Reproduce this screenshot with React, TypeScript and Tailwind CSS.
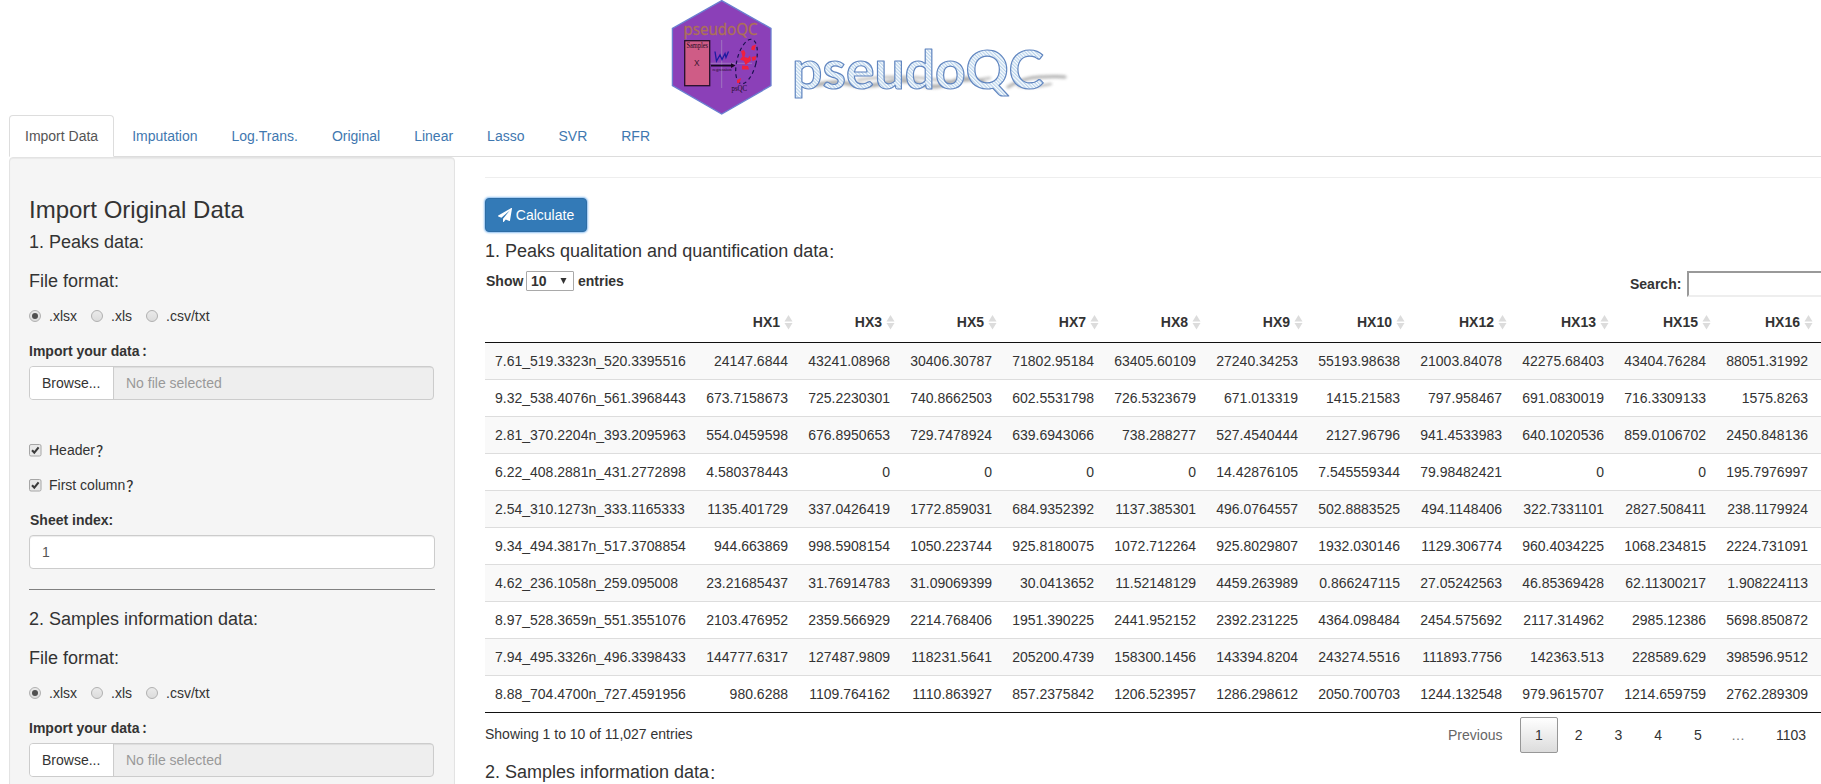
import React from "react";

const TABS = ["Import Data", "Imputation", "Log.Trans.", "Original", "Linear", "Lasso", "SVR", "RFR"];

const COLUMNS = ["HX1", "HX3", "HX5", "HX7", "HX8", "HX9", "HX10", "HX12", "HX13", "HX15", "HX16"];

const ROWS: string[][] = [
  ["7.61_519.3323n_520.3395516", "24147.6844", "43241.08968", "30406.30787", "71802.95184", "63405.60109", "27240.34253", "55193.98638", "21003.84078", "42275.68403", "43404.76284", "88051.31992"],
  ["9.32_538.4076n_561.3968443", "673.7158673", "725.2230301", "740.8662503", "602.5531798", "726.5323679", "671.013319", "1415.21583", "797.958467", "691.0830019", "716.3309133", "1575.8263"],
  ["2.81_370.2204n_393.2095963", "554.0459598", "676.8950653", "729.7478924", "639.6943066", "738.288277", "527.4540444", "2127.96796", "941.4533983", "640.1020536", "859.0106702", "2450.848136"],
  ["6.22_408.2881n_431.2772898", "4.580378443", "0", "0", "0", "0", "14.42876105", "7.545559344", "79.98482421", "0", "0", "195.7976997"],
  ["2.54_310.1273n_333.1165333", "1135.401729", "337.0426419", "1772.859031", "684.9352392", "1137.385301", "496.0764557", "502.8883525", "494.1148406", "322.7331101", "2827.508411", "238.1179924"],
  ["9.34_494.3817n_517.3708854", "944.663869", "998.5908154", "1050.223744", "925.8180075", "1072.712264", "925.8029807", "1932.030146", "1129.306774", "960.4034225", "1068.234815", "2224.731091"],
  ["4.62_236.1058n_259.095008", "23.21685437", "31.76914783", "31.09069399", "30.0413652", "11.52148129", "4459.263989", "0.866247115", "27.05242563", "46.85369428", "62.11300217", "1.908224113"],
  ["8.97_528.3659n_551.3551076", "2103.476952", "2359.566929", "2214.768406", "1951.390225", "2441.952152", "2392.231225", "4364.098484", "2454.575692", "2117.314962", "2985.12386", "5698.850872"],
  ["7.94_495.3326n_496.3398433", "144777.6317", "127487.9809", "118231.5641", "205200.4739", "158300.1456", "143394.8204", "243274.5516", "111893.7756", "142363.513", "228589.629", "398596.9512"],
  ["8.88_704.4700n_727.4591956", "980.6288", "1109.764162", "1110.863927", "857.2375842", "1206.523957", "1286.298612", "2050.700703", "1244.132548", "979.9615707", "1214.659759", "2762.289309"],
];

function Brand() {
  return (
    <svg className="ml-[660px] block h-[115px] w-[420px]" viewBox="660 0 420 115">
      <defs>
        <pattern id="hatch" width="2.5" height="2.5" patternUnits="userSpaceOnUse" patternTransform="rotate(-45)">
          <rect width="2.5" height="2.5" fill="#fafdff" />
          <rect width="1.2" height="2.5" fill="#b9d2ea" />
        </pattern>
        <filter id="soft" x="-10%" y="-80%" width="120%" height="260%">
          <feGaussianBlur stdDeviation="1.5" />
        </filter>
      </defs>
      <polygon points="721.7,0.6 771,28.4 771,85.6 721.7,114 672.4,85.6 672.4,28.4" fill="#8b40b8" stroke="#6a7fd0" strokeWidth="1.3" />
      <path d="M721.7 40V88M690 63.3H752" stroke="#a98bc4" strokeWidth="0.7" />
      <text x="683.5" y="34.6" fontFamily="'Noto Sans', sans-serif" fontSize="16.5" fill="#ad7156" stroke="#ad7156" strokeWidth="0.3" textLength="74" lengthAdjust="spacingAndGlyphs">pseudoQC</text>
      <rect x="684.7" y="40.7" width="25" height="45" fill="#cf5c86" stroke="#26102a" strokeWidth="1.3" />
      <text x="686.5" y="47.5" fontFamily="'Liberation Serif', serif" fontSize="7.5" fill="#1c0b22" textLength="21.5" lengthAdjust="spacingAndGlyphs">Samples</text>
      <text x="694" y="66.3" fontFamily="'Liberation Sans', sans-serif" fontSize="9" fill="#3a1630" textLength="5.5" lengthAdjust="spacingAndGlyphs">X</text>
      <path d="M715 51.5L716.5 61L720 55L722 59.5L725 53.5L726 57.5L728.5 51.5" fill="none" stroke="#1d1aa0" strokeWidth="1.3" />
      <path d="M711 65.6H732" stroke="#160822" strokeWidth="1.8" />
      <path d="M731 63.3L735.5 65.6L731 67.9Z" fill="#160822" />
      <text x="712.5" y="71" fontFamily="'Liberation Serif', serif" fontSize="5" fill="#1c0b22" textLength="19" lengthAdjust="spacingAndGlyphs">regression</text>
      <ellipse cx="746.5" cy="61.5" rx="9.6" ry="22.8" transform="rotate(14 746.5 61.5)" fill="none" stroke="#19104e" strokeWidth="1.2" strokeDasharray="3.6 3.2" />
      <g fill="#f0203f">
        <path d="M741 51l3-1 1.5 3-1 4 3.5 1 2-2.5 1 5-3 2.5-2.5 2-1.5-4-4-1.5 2.5-3z" />
        <path d="M752 46l4-1.5-1.5 6-3.5-1zM751.5 57l5-1-1 4-3 1zM742 65.5l6 .5 1 3.5-7 0zM737 80l4-2-1.5 5-2.5 0z" />
      </g>
      <text x="731.5" y="90.5" fontFamily="'Liberation Serif', serif" fontSize="8" fill="#1c0b22" textLength="15.5" lengthAdjust="spacingAndGlyphs">psQC</text>

      <g filter="url(#soft)" fill="none" stroke="#6b6b6b" strokeLinecap="round" opacity="0.55">
        <path d="M816 85Q835 80 850 84T885 83T920 84T952 82T985 84" strokeWidth="4" />
        <path d="M858 80Q900 74 930 79T990 78" strokeWidth="2" />
        <path d="M1008 87Q1022 78 1040 77T1065 77" strokeWidth="3" />
        <path d="M1018 86Q1034 88 1051 84" strokeWidth="2" />
      </g>
      <text x="792" y="88.5" fontFamily="Lato, sans-serif" fontWeight="700" fontSize="54" fill="url(#hatch)" stroke="#6186c0" strokeWidth="1.2" strokeLinejoin="round" textLength="252" lengthAdjust="spacingAndGlyphs">pseudoQC</text>
    </svg>
  );
}

function Radio({ label, checked, className }: { label: string; checked?: boolean; className: string }) {
  return (
    <label className={`flex items-center ${className}`}>
      <span className="flex h-3 w-3 items-center justify-center rounded-full border border-[#b0b0b0] bg-linear-to-b from-[#eaeaea] to-[#dcdcdc]">
        {checked && <span className="h-1.5 w-1.5 rounded-full bg-[#505050]" />}
      </span>
      <span className="ml-2">{label}</span>
    </label>
  );
}

function FormatRadios() {
  return (
    <div className="mt-[15px] flex h-5">
      <Radio label=".xlsx" checked className="w-[62px]" />
      <Radio label=".xls" className="w-[55px]" />
      <Radio label=".csv/txt" className="" />
    </div>
  );
}

function Check({ label }: { label: string }) {
  return (
    <label className="flex h-5 items-center">
      <svg className="h-[13px] w-[13px]" viewBox="0 0 13 13">
        <rect x="0.5" y="0.5" width="11.5" height="11.5" rx="1.5" fill="#e9e9e9" stroke="#a6a6a6" />
        <path d="M3 6.3L5.3 8.6L9.6 3.4" fill="none" stroke="#3c3c3c" strokeWidth="2.1" />
      </svg>
      <span className="ml-[7px]">{label}</span>
      <span className="ml-px font-['Noto_Sans_CJK_SC',sans-serif] text-[14px] leading-5 font-medium">？</span>
    </label>
  );
}

function FileInput() {
  return (
    <>
      <div className="mt-[15px] flex h-5 font-bold">
        Import your data
        <span className="ml-0.5 font-['Noto_Sans_CJK_SC',sans-serif] text-[12px] leading-[19px]">：</span>
      </div>
      <div className="mt-[5px] flex h-[34px] w-[405px] overflow-hidden rounded-[4px] border border-[#ccc] bg-[#eee]">
        <span className="w-[84px] border-r border-[#ccc] bg-white pl-3 leading-8">Browse...</span>
        <span className="grow pl-3 leading-8 text-[#999] shadow-[inset_0_1px_1px_rgba(0,0,0,0.075)]">No file selected</span>
      </div>
    </>
  );
}

function Sidebar() {
  return (
    <aside className="h-[700px] w-[446px] shrink-0 rounded-[4px] border border-[#e3e3e3] bg-[#f5f5f5] px-[19px] pt-[39px] shadow-[inset_0_1px_1px_rgba(0,0,0,0.05)]">
      <h3 className="text-[24px] leading-[26px]">Import Original Data</h3>
      <h4 className="mt-[9px] text-[18px] leading-5">1. Peaks data:</h4>
      <h4 className="mt-[19px] text-[18px] leading-5">File format:</h4>
      <FormatRadios />
      <FileInput />
      <div className="mt-10 flex flex-col gap-[15px]">
        <Check label="Header" />
        <Check label="First column" />
        <div className="h-5 pl-px font-bold">Sheet index:</div>
      </div>
      <div className="mt-[5px] h-[34px] rounded-[4px] border border-[#ccc] bg-white pl-3 leading-8 text-[#555] shadow-[inset_0_1px_1px_rgba(0,0,0,0.075)]">1</div>
      <hr className="mt-5 border-t border-[#808080]" />
      <h4 className="mt-[19px] text-[18px] leading-5">2. Samples information data:</h4>
      <h4 className="mt-[19px] text-[18px] leading-5">File format:</h4>
      <FormatRadios />
      <FileInput />
    </aside>
  );
}

function SortIcon() {
  return (
    <svg className="ml-1 h-[15px] w-[9px]" viewBox="0 0 9 15">
      <path d="M4.5 0L8.5 6.5H0.5ZM4.5 14.5L8.5 8H0.5Z" fill="#dcdcdc" />
    </svg>
  );
}

function DataTable() {
  return (
    <div className="w-[1340px]">
      <div className="flex h-[38px] border-b border-[#111]">
        <div className="w-[211px]" />
        {COLUMNS.map((c) => (
          <div key={c} className="flex w-[102px] items-center justify-end pr-[5px] pb-[3px] font-bold">
            {c}
            <SortIcon />
          </div>
        ))}
      </div>
      <div className="border-b border-[#111]">
        {ROWS.map((r, i) => (
          <div key={r[0]} className={`flex leading-[36px] ${i > 0 ? "h-[37px] border-t border-[#ddd]" : "h-9"} ${i % 2 === 0 ? "bg-[#f9f9f9]" : "bg-white"}`}>
            {r.map((v, j) => (
              <div key={j} className={j === 0 ? "w-[211px] pl-2.5" : "w-[102px] pr-2.5 text-right"}>
                {v}
              </div>
            ))}
          </div>
        ))}
      </div>
    </div>
  );
}

function Pagination() {
  return (
    <div className="flex h-9 shrink-0 leading-9">
      <span className="w-[72px] text-[#666]">Previous</span>
      <span className="w-[38px] rounded-[2px] border border-[#979797] bg-linear-to-b from-white to-[#dcdcdc] text-center leading-[34px]">1</span>
      {["2", "3", "4", "5"].map((p) => (
        <span key={p} className="ml-[1.75px] w-[38px] text-center">{p}</span>
      ))}
      <span className="ml-[1px] w-[40px] text-center text-[#777]">…</span>
      <span className="w-[60px] pl-[18px]">1103</span>
    </div>
  );
}

export default function App() {
  return (
    <div className="h-[784px] w-[1821px] overflow-hidden bg-white font-['Liberation_Sans',Arial,sans-serif] text-[14px] leading-5 text-[#333]">
      <Brand />
      <nav className="ml-[9px] flex h-[42px] border-b border-[#ddd]">
        {TABS.map((t, i) => (
          <a
            key={t}
            className={`mr-0.5 h-[42px] rounded-t-[4px] border px-[15px] py-2.5 ${i === 0 ? "border-[#ddd] border-b-white bg-white text-[#555]" : "border-transparent text-[#3f78b0]"}`}
          >
            {t}
          </a>
        ))}
      </nav>
      <div className="ml-[9px] flex">
        <Sidebar />
        <main className="ml-[30px] w-[1340px] shrink-0 pt-5">
          <hr className="border-t border-[#eee]" />
          <button className="mt-5 flex h-[34px] w-[102px] items-center justify-center rounded-[4px] border border-[#2e6da4] bg-[#337ab7] text-white shadow-[0_0_2px_1px_#8fc0f0]">
            <svg className="mr-1 h-3.5 w-3.5" viewBox="0 0 1792 1792" fill="currentColor">
              <path d="M1764 11q33 24 27 64l-256 1536q-5 29-32 45-14 8-31 8-11 0-24-5l-453-185-242 295q-18 23-49 23-13 0-22-4-19-7-30.500-23.500t-11.500-36.500v-349l864-1059-1069 925-395-162q-37-14-40-55-2-40 32-59l1664-960q15-9 32-9 20 0 36 11z" />
            </svg>
            Calculate
          </button>
          <h4 className="mt-[9px] flex h-5 text-[18px] leading-5">
            1. Peaks qualitation and quantification data
            <span className="font-['Noto_Sans_CJK_SC',sans-serif] text-[14px]">：</span>
          </h4>
          <div className="mt-[10px] flex h-[34px] items-start font-bold">
            <span className="w-[41px] shrink-0 pl-px">Show</span>
            <span className="flex h-5 w-12 shrink-0 items-center justify-between rounded-[1px] border border-[#a9a9a9] bg-white pr-1.5 pl-1">
              10
              <svg className="h-[6px] w-[7px]" viewBox="0 0 7 6">
                <path d="M0.5 0H6.5L3.5 6Z" fill="#333" />
              </svg>
            </span>
            <span className="ml-1 w-[1052px] shrink-0">entries</span>
            <span className="mt-[3px] w-[57px] shrink-0 whitespace-nowrap">Search:</span>
            <span className="h-[26px] w-[171px] shrink-0 border-2 border-[#999] border-b-[#eee] bg-white" />
          </div>
          <DataTable />
          <div className="flex h-[49px] items-start pt-1">
            <div className="mt-[7px] w-[963px] shrink-0">Showing 1 to 10 of 11,027 entries</div>
            <Pagination />
          </div>
          <h4 className="flex h-5 text-[18px] leading-5">
            2. Samples information data
            <span className="font-['Noto_Sans_CJK_SC',sans-serif] text-[14px]">：</span>
          </h4>
        </main>
      </div>
    </div>
  );
}
